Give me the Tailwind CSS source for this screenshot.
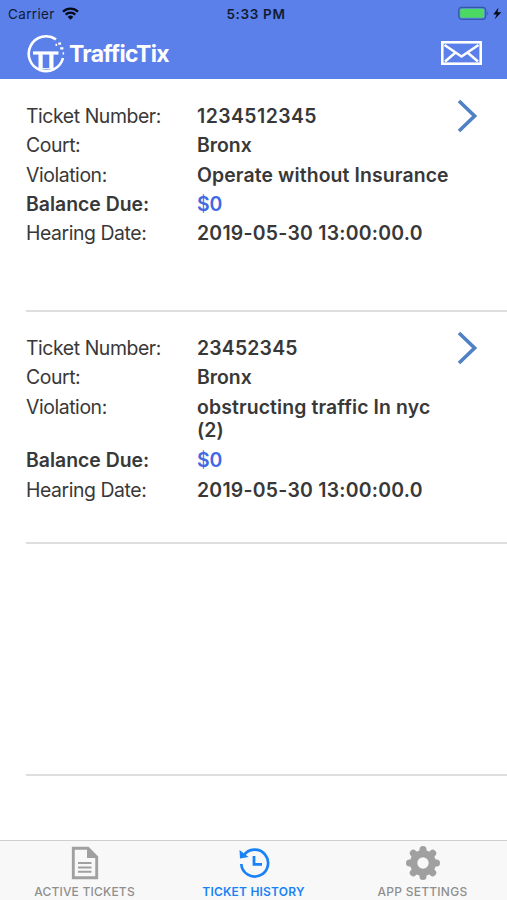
<!DOCTYPE html>
<html lang="en">
<head>
<meta charset="utf-8">
<title>TrafficTix</title>
<script src="https://cdn.jsdelivr.net/npm/@tailwindcss/browser@4"></script>
</head>
<body class="w-[507px] h-[900px] overflow-hidden bg-white flex flex-col font-['Inter','Liberation_Sans',sans-serif] text-[#383838]">
  <header class="h-[79px] shrink-0 bg-[#5b80ea]">
    <div class="h-[28px] grid grid-cols-3 items-center text-[13.5px] text-[#101b33]">
      <div class="flex items-center gap-[7px] pl-[8px]">
        <span class="tracking-[0.35px]">Carrier</span>
        <svg class="w-[17px] h-[13px] -mt-[2px]" viewBox="0 0 17 13" fill="none" stroke="#060b18" stroke-width="2.3"><path d="M1 4.700a10.600 10.600 0 0 1 15 0M3.700 7.600a6.800 6.800 0 0 1 9.600 0"/><path d="M8.500 12.700L5.700 9.900a4 4 0 0 1 5.600 0z" fill="#060b18" stroke="none"/></svg>
      </div>
      <div class="text-center font-semibold tracking-[0.65px] pl-[5px] whitespace-nowrap">5:33 PM</div>
      <div class="flex justify-end items-center pr-[5px]">
        <svg class="w-[45px] h-[16px]" viewBox="0 0 45 16"><rect x="1.700" y="1.300" width="27" height="12" rx="3" fill="none" stroke="#3557a8" stroke-width="1.200"/><rect x="3.200" y="2.800" width="24" height="9" rx="1.500" fill="#4bd964"/><path d="M30.300 5.200q2 2 0 4.200z" fill="#3557a8"/><path d="M41.500 1.500L36.300 8.500h3.400L37.500 13.500L44.300 6.200h-3.800z" fill="#050a14"/></svg>
      </div>
    </div>
    <div class="h-[51px] flex items-center justify-between pl-[26px] pr-[25px]">
      <div class="flex items-center gap-[4px]">
        <svg class="w-[39px] h-[40px]" viewBox="0 0 39 40" fill="none" stroke="#fff"><path d="M30 5.400A17.400 17.400 0 1 0 37 24" stroke-width="2.600"/><path d="M32.300 9.600h2.800M34.200 14.300h3.200M29.500 10.800h1.600M36.600 19.300h1.500" stroke-width="2.300"/><path d="M7 19h25.500" stroke-width="3.200"/><path d="M14.600 19v15M25.400 19v15" stroke-width="4.200"/><path d="M11.500 34.700h17" stroke-width="1.200"/></svg>
        <span class="pt-[2px] text-[23px] font-bold text-white tracking-[-0.7px]">TrafficTix</span>
      </div>
      <svg class="w-[41px] h-[24px] -mt-[2px]" viewBox="0 0 41 24" fill="none" stroke="#fff"><rect x="1.300" y="1.300" width="38.400" height="21.400" stroke-width="2.600"/><path d="M3.500 4L20.500 15.500L37.500 4M4 20.500L14.300 11.800M37 20.500L26.700 11.800" stroke-width="2.500"/></svg>
    </div>
  </header>

  <main class="flex-1 pt-px pl-[26px] text-[19.4px] leading-[23.300px]">
    <section class="relative h-[232.200px] border-b-2 border-[#dededf] pt-[25px] flex flex-col gap-[6px]">
      <div class="flex"><span class="w-[171px] tracking-[-0.42px]">Ticket Number:</span><b class="font-semibold tracking-[0.45px]">1234512345</b></div>
      <div class="flex"><span class="w-[171px] tracking-[-0.42px]">Court:</span><b class="font-semibold">Bronx</b></div>
      <div class="flex"><span class="w-[171px] tracking-[-0.42px]">Violation:</span><b class="font-semibold tracking-[0.12px]">Operate without Insurance</b></div>
      <div class="flex"><b class="w-[171px] font-semibold">Balance Due:</b><b class="font-semibold text-[#4169e1]">$0</b></div>
      <div class="flex"><span class="w-[171px] tracking-[-0.42px]">Hearing Date:</span><b class="font-semibold tracking-[0.26px]">2019-05-30 13:00:00.0</b></div>
      <svg class="absolute right-[29px] top-[19px] w-[21px] h-[34px]" viewBox="0 0 21 34" fill="none" stroke="#4f81c4" stroke-width="3.600"><path d="M2 2L17.600 17L2 32"/></svg>
    </section>
    <section class="relative h-[232.200px] border-b-2 border-[#dededf] pt-[25px] flex flex-col gap-[6px]">
      <div class="flex"><span class="w-[171px] tracking-[-0.42px]">Ticket Number:</span><b class="font-semibold tracking-[0.2px]">23452345</b></div>
      <div class="flex"><span class="w-[171px] tracking-[-0.42px]">Court:</span><b class="font-semibold">Bronx</b></div>
      <div class="flex"><span class="w-[171px] tracking-[-0.42px]">Violation:</span><b class="font-semibold tracking-[0.12px]">obstructing traffic In nyc<br>(2)</b></div>
      <div class="flex pt-px"><b class="w-[171px] font-semibold">Balance Due:</b><b class="font-semibold text-[#4169e1]">$0</b></div>
      <div class="flex"><span class="w-[171px] tracking-[-0.42px]">Hearing Date:</span><b class="font-semibold tracking-[0.26px]">2019-05-30 13:00:00.0</b></div>
      <svg class="absolute right-[29px] top-[19px] w-[21px] h-[34px]" viewBox="0 0 21 34" fill="none" stroke="#4f81c4" stroke-width="3.600"><path d="M2 2L17.600 17L2 32"/></svg>
    </section>
    <section class="h-[231.700px] border-b-2 border-[#dededf]"></section>
  </main>

  <nav class="h-[60px] shrink-0 grid grid-cols-3 bg-[#f8f8f8] border-t border-[#cfcfcf] text-[12px] leading-[14px] font-medium text-[#8f8f8f]">
    <div class="flex flex-col items-center pt-[5px] gap-[5px]">
      <svg class="w-[28px] h-[34px]" viewBox="0 0 28 34" fill="none" stroke="#a0a0a0"><path d="M2.300 2.300H17L25.700 11V31.700H2.300z" stroke-width="2.900"/><path d="M16 1V12H27z" fill="#a0a0a0" stroke="none"/><path d="M7 17H20.500M7 21.400H20.500M7 25.800H20.500" stroke-width="2"/></svg>
      <span class="tracking-[0.2px]">ACTIVE TICKETS</span>
    </div>
    <div class="flex flex-col items-center pt-[5px] gap-[5px] text-[#1a82f7]">
      <svg class="w-[32px] h-[34px]" viewBox="0 0 32 34" fill="none" stroke="#1a82f7"><path d="M5.500 9.700A13.400 13.400 0 1 1 3.300 18" stroke-width="2.700"/><path d="M1.500 4L2 12.500L10.500 11z" fill="#1a82f7" stroke="none"/><path d="M16 10V18.300H24" stroke-width="2.800"/></svg>
      <span class="font-semibold tracking-[0.2px]">TICKET HISTORY</span>
    </div>
    <div class="flex flex-col items-center pt-[5px] gap-[5px]">
      <svg class="w-[36px] h-[34px]" viewBox="-18 -17 36 34" fill="#a0a0a0"><g stroke="#a0a0a0" stroke-width="7" stroke-linecap="round"><path d="M0-13.500V13.500M-13.500 0H13.500M-9.700-9.700L9.700 9.700M-9.700 9.700L9.700-9.700"/></g><circle r="13"/><circle r="5.700" fill="#f8f8f8"/></svg>
      <span class="tracking-[0.25px]">APP SETTINGS</span>
    </div>
  </nav>
</body>
</html>
